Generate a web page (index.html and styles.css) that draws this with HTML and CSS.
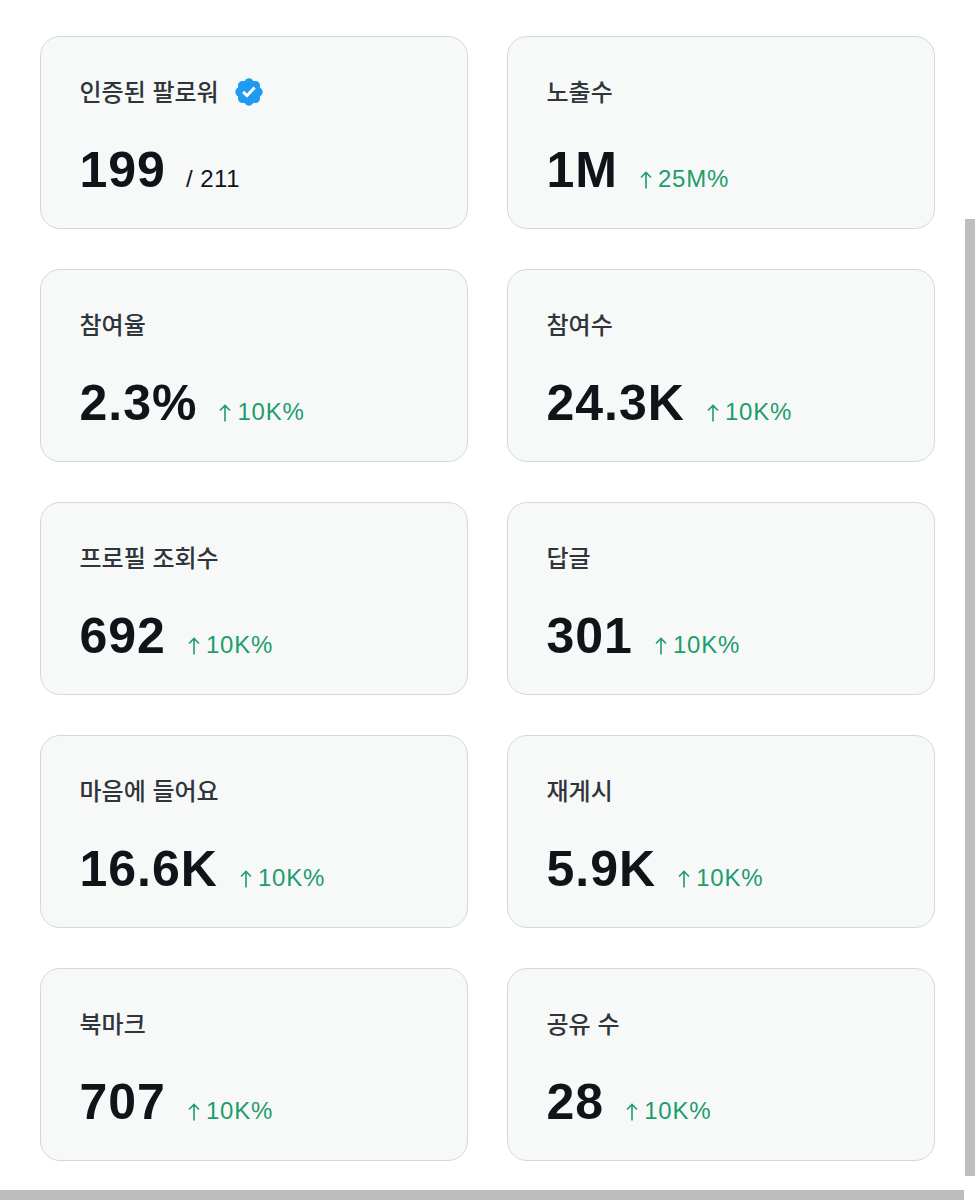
FILE: index.html
```html
<!DOCTYPE html>
<html lang="ko">
<head>
<meta charset="utf-8">
<link rel="stylesheet" href="styles.css">
</head>
<body>
<main class="grid">
  <section class="card">
    <div class="label">인증된 팔로워
      <svg class="badge" viewBox="0 0 24 24"><path fill="#1d9bf0" d="M22.25 12c0-1.43-.88-2.67-2.19-3.34.46-1.39.2-2.9-.81-3.91s-2.52-1.27-3.91-.81c-.66-1.31-1.91-2.19-3.34-2.19s-2.67.88-3.33 2.19c-1.4-.46-2.91-.2-3.92.81s-1.26 2.52-.8 3.91c-1.31.67-2.2 1.91-2.2 3.34s.89 2.67 2.2 3.34c-.46 1.39-.21 2.9.8 3.91s2.52 1.26 3.91.81c.67 1.31 1.91 2.19 3.34 2.19s2.68-.88 3.34-2.19c1.39.45 2.9.2 3.91-.81s1.27-2.52.81-3.91c1.31-.67 2.19-1.91 2.19-3.34z"/><path fill="none" stroke="#fff" stroke-width="2.2" d="M7.6 11.9l2.9 2.9 5.7-6.1"/></svg>
    </div>
    <div class="value"><span class="num">199</span><span class="sub">/ 211</span></div>
  </section>
  <section class="card">
    <div class="label">노출수</div>
    <div class="value"><span class="num">1M</span><span class="delta"><svg class="arrow" viewBox="0 0 12 18"><path d="M6 17.5V1.5M1 6.5L6 1.5l5 5" fill="none" stroke="currentColor" stroke-width="1.6"/></svg>25M%</span></div>
  </section>
  <section class="card">
    <div class="label">참여율</div>
    <div class="value"><span class="num">2.3%</span><span class="delta"><svg class="arrow" viewBox="0 0 12 18"><path d="M6 17.5V1.5M1 6.5L6 1.5l5 5" fill="none" stroke="currentColor" stroke-width="1.6"/></svg>10K%</span></div>
  </section>
  <section class="card">
    <div class="label">참여수</div>
    <div class="value"><span class="num">24.3K</span><span class="delta"><svg class="arrow" viewBox="0 0 12 18"><path d="M6 17.5V1.5M1 6.5L6 1.5l5 5" fill="none" stroke="currentColor" stroke-width="1.6"/></svg>10K%</span></div>
  </section>
  <section class="card">
    <div class="label">프로필 조회수</div>
    <div class="value"><span class="num">692</span><span class="delta"><svg class="arrow" viewBox="0 0 12 18"><path d="M6 17.5V1.5M1 6.5L6 1.5l5 5" fill="none" stroke="currentColor" stroke-width="1.6"/></svg>10K%</span></div>
  </section>
  <section class="card">
    <div class="label">답글</div>
    <div class="value"><span class="num">301</span><span class="delta"><svg class="arrow" viewBox="0 0 12 18"><path d="M6 17.5V1.5M1 6.5L6 1.5l5 5" fill="none" stroke="currentColor" stroke-width="1.6"/></svg>10K%</span></div>
  </section>
  <section class="card">
    <div class="label">마음에 들어요</div>
    <div class="value"><span class="num">16.6K</span><span class="delta"><svg class="arrow" viewBox="0 0 12 18"><path d="M6 17.5V1.5M1 6.5L6 1.5l5 5" fill="none" stroke="currentColor" stroke-width="1.6"/></svg>10K%</span></div>
  </section>
  <section class="card">
    <div class="label">재게시</div>
    <div class="value"><span class="num">5.9K</span><span class="delta"><svg class="arrow" viewBox="0 0 12 18"><path d="M6 17.5V1.5M1 6.5L6 1.5l5 5" fill="none" stroke="currentColor" stroke-width="1.6"/></svg>10K%</span></div>
  </section>
  <section class="card">
    <div class="label">북마크</div>
    <div class="value"><span class="num">707</span><span class="delta"><svg class="arrow" viewBox="0 0 12 18"><path d="M6 17.5V1.5M1 6.5L6 1.5l5 5" fill="none" stroke="currentColor" stroke-width="1.6"/></svg>10K%</span></div>
  </section>
  <section class="card">
    <div class="label">공유 수</div>
    <div class="value"><span class="num">28</span><span class="delta"><svg class="arrow" viewBox="0 0 12 18"><path d="M6 17.5V1.5M1 6.5L6 1.5l5 5" fill="none" stroke="currentColor" stroke-width="1.6"/></svg>10K%</span></div>
  </section>
</main>
<div class="scroll-v"></div>
<div class="scroll-h"></div>
</body>
</html>
```
FILE: styles.css
```css
html, body {
  margin: 0;
  padding: 0;
  background: #ffffff;
}
body {
  font-family: "Liberation Sans", "Noto Sans CJK KR", sans-serif;
  overflow: hidden;
  height: 1200px;
}
.grid {
  display: grid;
  grid-template-columns: 428px 428px;
  column-gap: 39px;
  row-gap: 40px;
  padding: 36px 0 0 40px;
}
.card {
  box-sizing: border-box;
  height: 193px;
  border: 1.5px solid #cfd9de;
  border-radius: 20px;
  background: #f7f9f9;
  padding: 39px 38px 0 38.5px;
}
.label {
  display: flex;
  align-items: center;
  font-family: "Noto Sans CJK KR", sans-serif;
  font-size: 24px;
  font-weight: 500;
  line-height: 30px;
  height: 30px;
  color: #30353a;
}
.badge {
  width: 32px;
  height: 32px;
  margin-left: 14px;
  position: relative;
  top: 1px;
}
.value {
  display: flex;
  align-items: baseline;
  margin-top: 36px;
  line-height: 56px;
}
.num {
  font-family: "Liberation Sans", sans-serif;
  font-size: 50px;
  font-weight: 700;
  letter-spacing: 1px;
  color: #0f1419;
}
.sub {
  margin-left: 20px;
  font-size: 24px;
  letter-spacing: 0.5px;
  color: #0f1419;
}
.delta {
  display: inline-flex;
  align-items: baseline;
  margin-left: 22px;
  font-size: 24px;
  letter-spacing: 0.8px;
  color: #1f9c6b;
}
.arrow {
  width: 12px;
  height: 18px;
  margin-right: 6px;
  align-self: center;
  position: relative;
  top: 1px;
}
.scroll-v {
  position: fixed;
  left: 965px;
  top: 219px;
  width: 10px;
  height: 957px;
  background: #bdbebf;
}
.scroll-h {
  position: fixed;
  left: 0;
  top: 1190px;
  width: 964px;
  height: 10px;
  background: #bdbebf;
}
```
